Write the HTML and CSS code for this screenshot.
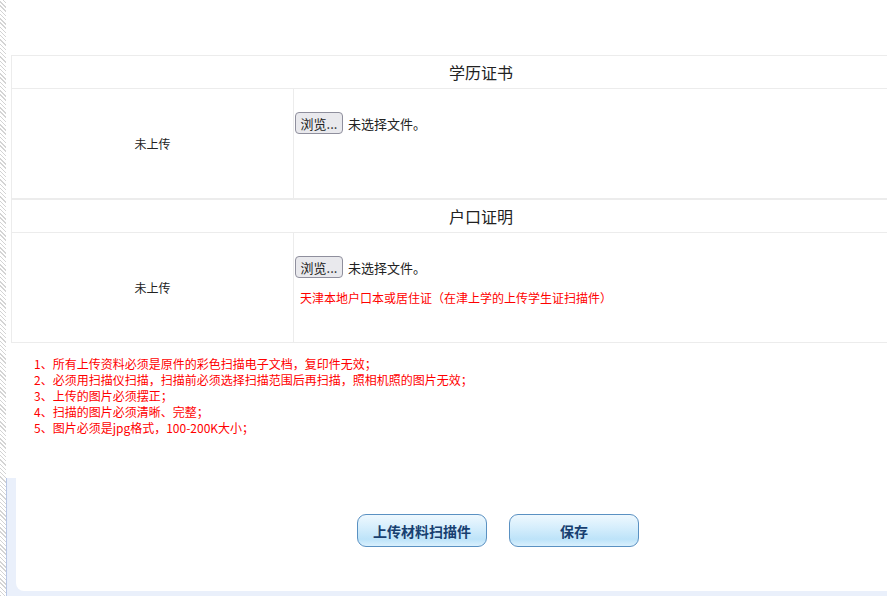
FILE: index.html
```html
<!DOCTYPE html>
<html lang="zh-CN">
<head>
<meta charset="utf-8">
<title>上传材料</title>
<link rel="stylesheet" href="styles.css">
</head>
<body>
<div class="page">
  <div class="strip"></div>
  <div class="main">
    <div class="top">
      <table class="upload">
        <colgroup><col class="c-status"><col class="c-file"></colgroup>
        <tr class="head"><th colspan="2">学历证书</th></tr>
        <tr class="row">
          <td class="status">未上传</td>
          <td class="file">
            <div class="picker"><button class="browse" type="button">浏览...</button><span class="none">未选择文件。</span></div>
          </td>
        </tr>
        <tr class="head head2"><th colspan="2">户口证明</th></tr>
        <tr class="row">
          <td class="status">未上传</td>
          <td class="file">
            <div class="picker"><button class="browse" type="button">浏览...</button><span class="none">未选择文件。</span></div>
            <p class="hint">天津本地户口本或居住证（在津上学的上传学生证扫描件）</p>
          </td>
        </tr>
      </table>
      <ul class="notes">
        <li>1、所有上传资料必须是原件的彩色扫描电子文档，复印件无效；</li>
        <li>2、必须用扫描仪扫描，扫描前必须选择扫描范围后再扫描，照相机照的图片无效；</li>
        <li>3、上传的图片必须摆正；</li>
        <li>4、扫描的图片必须清晰、完整；</li>
        <li>5、图片必须是jpg格式，100-200K大小；</li>
      </ul>
    </div>
    <div class="bottom">
      <div class="panel">
        <div class="actions">
          <button class="act" type="button">上传材料扫描件</button>
          <button class="act" type="button">保存</button>
        </div>
      </div>
    </div>
  </div>
</div>
</body>
</html>
```

FILE: styles.css
```css
html, body {
  margin: 0;
  padding: 0;
  width: 887px;
  height: 596px;
  overflow: hidden;
  background: #fff;
  font-family: "Noto Sans CJK SC", "Noto Sans", sans-serif;
  color: #222;
}

.page {
  display: flex;
  height: 596px;
}

.strip {
  width: 6px;
  flex: none;
  background: repeating-linear-gradient(45deg, #d4d4d4 0px, #d4d4d4 1px, #ffffff 1px, #ffffff 3px);
}

.main {
  flex: 1;
  display: flex;
  flex-direction: column;
  min-width: 0;
  overflow: hidden;
}

.top {
  height: 478px;
  flex: none;
  padding-top: 55px;
  padding-left: 5px;
  box-sizing: border-box;
  overflow: hidden;
}

.upload {
  width: 940px;
  border-collapse: collapse;
  table-layout: fixed;
}

.c-status {
  width: 282px;
}

.upload th,
.upload td {
  border: 1px solid #ececec;
  padding: 0;
}

.head th {
  height: 32px;
  font-size: 16px;
  font-weight: normal;
  color: #222;
  text-align: center;
  vertical-align: middle;
}

.head2 th {
  border-top: 2px solid #ececec;
  height: 32px;
}

.row td {
  height: 109px;
}

.status {
  text-align: center;
  vertical-align: middle;
  font-size: 12px;
  color: #222;
}

.file {
  vertical-align: top;
}

.picker {
  display: flex;
  align-items: center;
  gap: 5px;
  height: 22px;
  margin: 23px 0 0 1px;
}

.browse {
  height: 22px;
  width: 48px;
  padding: 0;
  font-family: "Noto Sans CJK SC", sans-serif;
  font-size: 13px;
  color: #222;
  background: #e9e9ed;
  border: 1px solid #8f8f9d;
  border-radius: 4px;
}

.none {
  font-size: 13px;
  color: #222;
}

.hint {
  margin: 12px 0 0 6px;
  font-size: 12px;
  color: #f00;
  line-height: 16px;
}

.notes {
  list-style: none;
  margin: 13px 0 0 23px;
  padding: 0;
  font-size: 12px;
  line-height: 16px;
  color: #f00;
}

.bottom {
  flex: 1;
  background: #eaf0fb;
  border-left: 1px solid #b9c7e4;
  padding: 0 0 5px 9px;
  display: flex;
}

.panel {
  flex: 1;
  background: #fff;
  border-radius: 0 0 0 8px;
  padding-top: 36px;
  padding-left: 341px;
}

.actions {
  display: flex;
  gap: 22px;
}

.act {
  width: 130px;
  height: 33px;
  border: 1px solid #5a91c2;
  border-radius: 9px;
  background: linear-gradient(to bottom, #eef8fe 0%, #d6eefc 40%, #bde3f9 78%, #d9f0fd 100%);
  font-family: "Noto Sans CJK SC", sans-serif;
  font-size: 14px;
  font-weight: bold;
  color: #173f70;
  padding: 0;
}
```
